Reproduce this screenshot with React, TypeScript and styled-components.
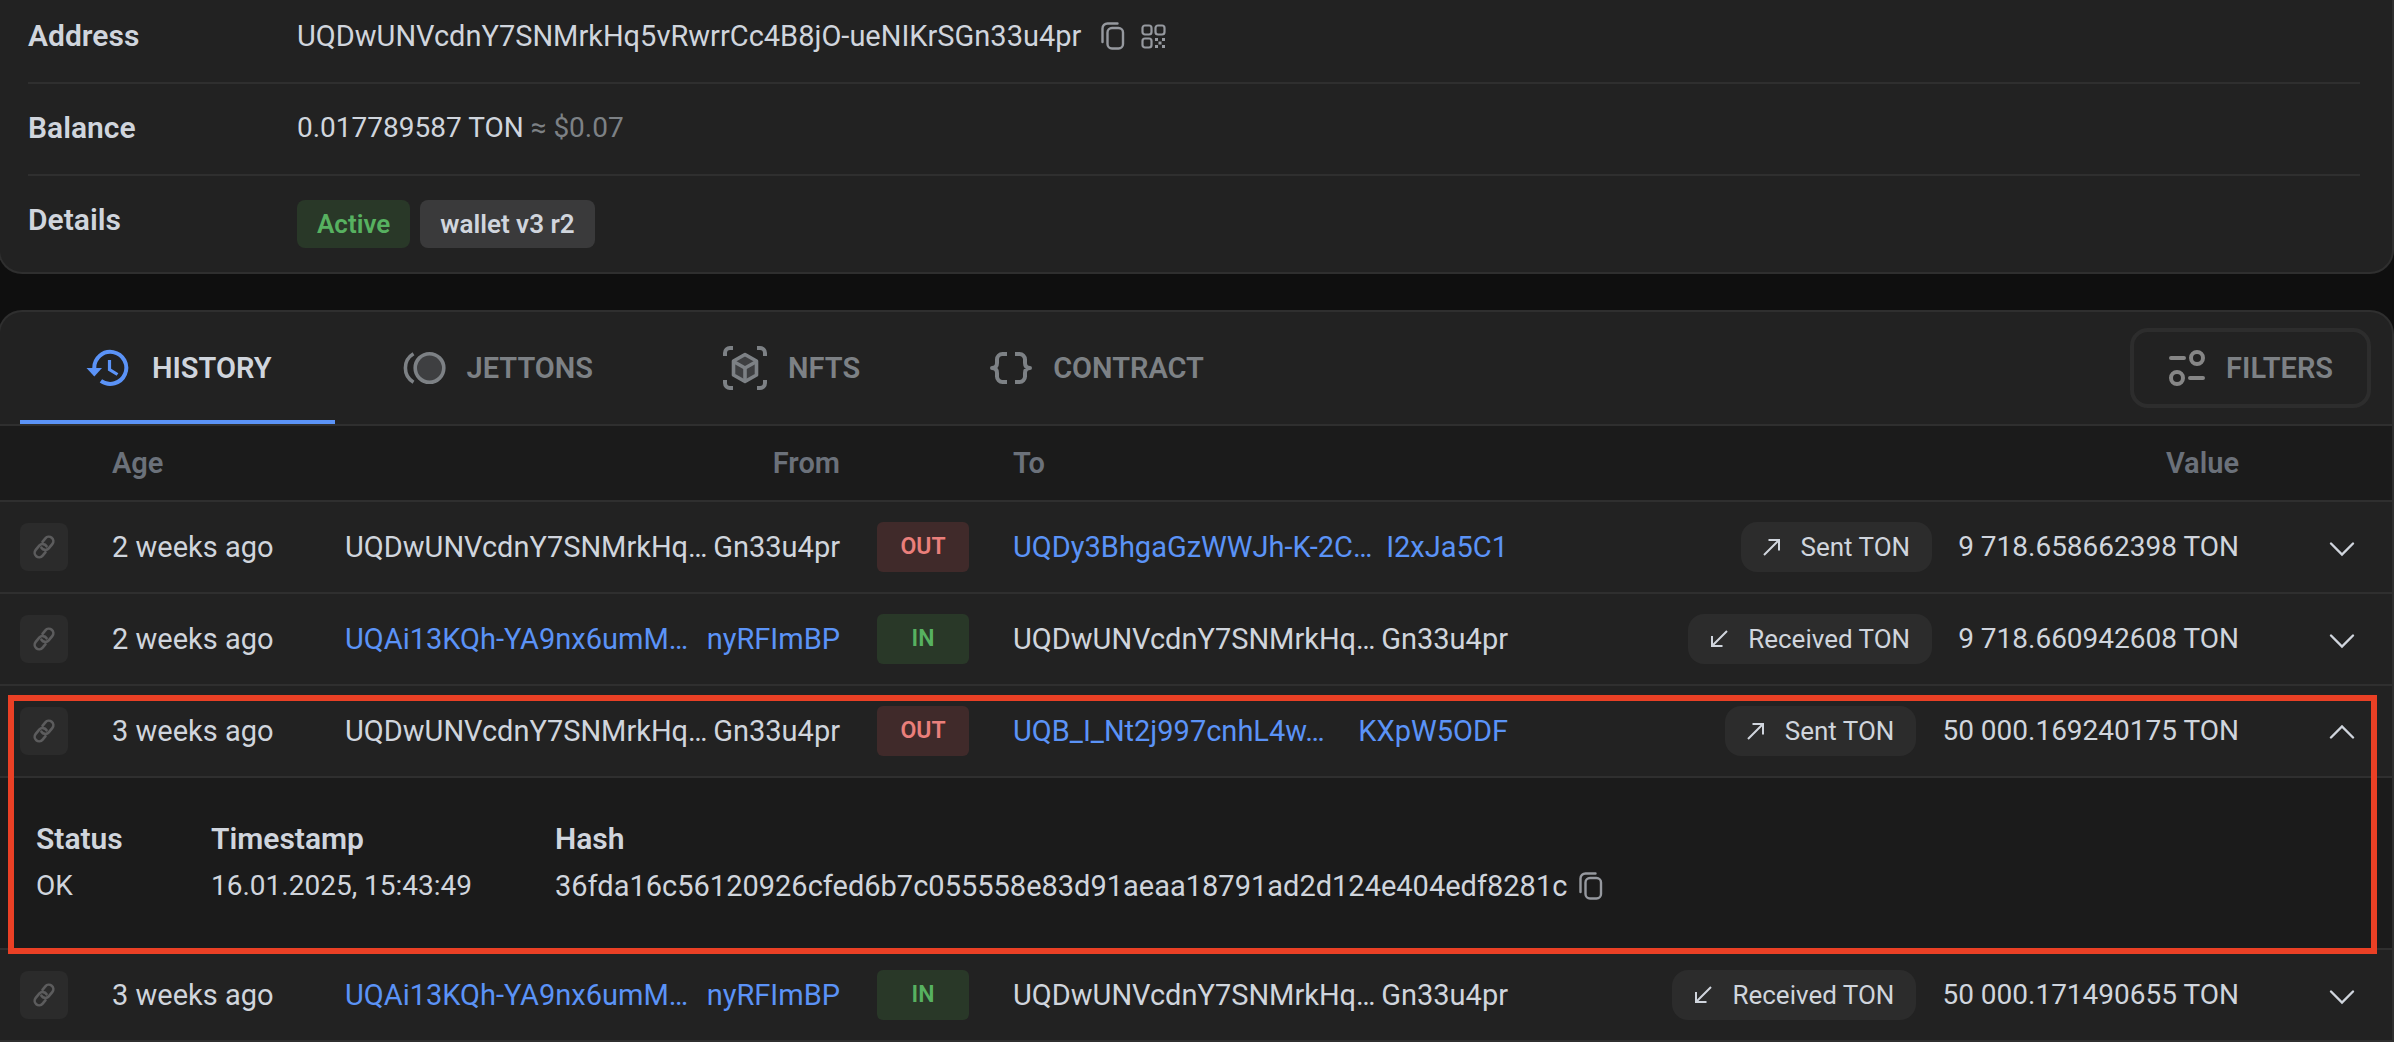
import React, { useState } from "react";
import styled, { createGlobalStyle, css } from "styled-components";

const color = {
  page: "#0f0f0f",
  card: "#222222",
  sunken: "#1b1b1b",
  line: "#2f2f2f",
  text: "#d0d5dd",
  muted: "#7d8185",
  faint: "#6b717a",
  accent: "#5b93f7",
  green: "#57b160",
  greenBg: "#293828",
  red: "#ea7f7b",
  redBg: "#402a2a",
  chip: "#2c2c2c",
  mark: "#ea4025",
};

const GlobalStyle = createGlobalStyle`
  * { box-sizing: border-box; }
  body {
    margin: 0;
    background: ${color.page};
    color: ${color.text};
    font-family: Roboto, "Liberation Sans", sans-serif;
    font-size: 29px;
    line-height: 34px;
    overflow-x: hidden;
    scrollbar-width: none;
  }
  button {
    font: inherit;
    color: inherit;
    background: none;
    border: 0;
    padding: 0;
    cursor: pointer;
  }
`;

const Page = styled.main`
  display: flex;
  flex-direction: column;
  gap: 36px;
  margin-left: -2px;
`;

const Card = styled.section<{ $top?: boolean }>`
  background: ${color.card};
  border: 2px solid ${color.line};
  border-radius: 24px;
  overflow: hidden;
  ${(p) =>
    p.$top
      ? css`
          border-top: 0;
          border-radius: 0 0 24px 24px;
        `
      : css`
          border-bottom: 0;
          border-radius: 24px 24px 0 0;
        `}
`;

/* Account summary */

const Summary = styled.dl`
  margin: 0;
  padding: 0 32px 0 28px;
`;

const SummaryRow = styled.div`
  display: grid;
  grid-template-columns: 269px 1fr;
  height: 92px;
  padding-top: 27px;
  border-bottom: 2px solid ${color.line};

  &:first-child {
    height: 84px;
    padding-top: 19px;
  }
  &:last-child {
    height: 96px;
    border-bottom: 0;
  }
`;

const Term = styled.dt`
  font-size: 30px;
  font-weight: 600;
`;

const Detail = styled.dd`
  display: flex;
  align-items: flex-start;
  margin: 0;
`;

const AddressIcons = styled.span`
  display: flex;
  gap: 16px;
  margin-left: 20px;
`;

const IconButton = styled.button`
  display: flex;
  align-items: center;
  height: 34px;
  color: #96999f;
`;

const Amount = styled.span`
  font-size: 28px;
`;

const Fiat = styled.span`
  color: ${color.muted};
`;

const Tags = styled.div`
  display: flex;
  gap: 10px;
  margin-top: -3px;
`;

const Tag = styled.span<{ $active?: boolean }>`
  padding: 0 20px;
  border-radius: 8px;
  font-size: 26px;
  font-weight: 600;
  line-height: 48px;
  color: ${(p) => (p.$active ? color.green : color.text)};
  background: ${(p) => (p.$active ? color.greenBg : "#3a3a3b")};
`;

/* Tabs */

const TabBar = styled.div`
  display: flex;
  align-items: center;
  justify-content: space-between;
  height: 114px;
  padding: 0 21px 0 20px;
  border-bottom: 2px solid ${color.line};
`;

const Tabs = styled.div`
  display: flex;
  align-self: stretch;
`;

const Tab = styled.button<{ $active?: boolean }>`
  display: flex;
  align-items: center;
  gap: 20px;
  padding: 0 63px 0 66px;
  font-weight: 600;
  color: ${(p) => (p.$active ? color.text : color.muted)};
  box-shadow: ${(p) => (p.$active ? `inset 0 -4px ${color.accent}` : "none")};

  svg {
    flex: none;
  }
`;

const FilterButton = styled.button`
  display: flex;
  align-items: center;
  gap: 20px;
  height: 80px;
  padding: 0 34px;
  border: 4px solid #2d2d2d;
  border-radius: 18px;
  font-weight: 600;
  color: ${color.muted};
`;

/* Transactions */

const Table = styled.table`
  width: 100%;
  table-layout: fixed;
  border-collapse: separate;
  border-spacing: 0;
`;

const Col = styled.col<{ $w?: number }>`
  width: ${(p) => (p.$w ? `${p.$w}px` : "auto")};
`;

const HeadCell = styled.th<{ $right?: boolean }>`
  height: 76px;
  padding: 0;
  background: ${color.sunken};
  border-bottom: 2px solid ${color.line};
  color: ${color.faint};
  font-weight: 600;
  text-align: ${(p) => (p.$right ? "right" : "left")};
`;

const Cell = styled.td<{ $right?: boolean }>`
  height: 92px;
  padding: 0;
  border-bottom: 2px solid ${color.line};
  text-align: ${(p) => (p.$right ? "right" : "left")};
  white-space: nowrap;
`;

const LinkCell = styled(Cell)`
  padding-left: 20px;
`;

const DirectionCell = styled(Cell)`
  padding-left: 37px;
`;

const ChevronCell = styled(Cell)`
  padding-right: 33px;
`;

const LinkBox = styled.a`
  display: flex;
  align-items: center;
  justify-content: center;
  width: 48px;
  height: 48px;
  border-radius: 8px;
  background: #2b2b2b;
  color: #5c5c5d;
`;

const Address = styled.span`
  display: flex;
  justify-content: space-between;
`;

const AddressLink = styled.a`
  display: flex;
  justify-content: space-between;
  color: ${color.accent};
  text-decoration: none;
`;

const Direction = styled.span<{ $out: boolean }>`
  display: block;
  width: 92px;
  border-radius: 6px;
  font-size: 23px;
  font-weight: 600;
  line-height: 50px;
  text-align: center;
  color: ${(p) => (p.$out ? color.red : color.green)};
  background: ${(p) => (p.$out ? color.redBg : color.greenBg)};
`;

const ValueGroup = styled.div`
  display: flex;
  align-items: center;
  justify-content: flex-end;
  gap: 26px;
  font-size: 28px;
`;

const Action = styled.span`
  display: flex;
  align-items: center;
  gap: 20px;
  height: 50px;
  padding: 0 22px;
  border-radius: 16px;
  background: ${color.chip};
  font-size: 26px;
`;

const ChevronButton = styled.button`
  display: inline-flex;
  padding: 4px;
  vertical-align: middle;
`;

const Group = styled.tbody<{ $marked?: boolean }>`
  ${(p) =>
    p.$marked &&
    css`
      position: relative;

      &::after {
        content: "";
        position: absolute;
        z-index: 1;
        inset: 9px 15px -4px 8px;
        border: 6px solid ${color.mark};
        pointer-events: none;
      }
    `}
`;

const ExpandedCell = styled.td`
  height: 172px;
  padding: 44px 36px 0;
  vertical-align: top;
  background: ${color.sunken};
  border-bottom: 2px solid ${color.line};
`;

const Facts = styled.dl`
  display: grid;
  grid-template-columns: 175px 344px 1fr;
  margin: 0;
`;

const FactName = styled.dt`
  margin-bottom: 13px;
  font-size: 30px;
  font-weight: 600;
`;

const FactValue = styled.dd<{ $small?: boolean }>`
  display: flex;
  gap: 12px;
  margin: 0;
  font-size: ${(p) => (p.$small ? 28 : 29)}px;
`;

/* Icons */

const CopyIcon = () => (
  <svg width="24" height="28" viewBox="0 0 24 28" fill="none" stroke="currentColor" strokeWidth="2.4" strokeLinecap="round">
    <rect x="6.5" y="6" width="15.5" height="20.5" rx="4.5" />
    <path d="M1.5 20V6.5a5 5 0 0 1 5-5H16.5" />
  </svg>
);

const QrIcon = () => (
  <svg width="25" height="25" viewBox="0 0 25 25" fill="none" stroke="currentColor" strokeWidth="2.2">
    <rect x="1.5" y="1.5" width="9" height="9" rx="2.5" />
    <rect x="14.5" y="1.5" width="9" height="9" rx="2.5" />
    <rect x="1.5" y="14.5" width="9" height="9" rx="2.5" />
    <path
      fill="currentColor"
      stroke="none"
      d="M14 14h3v3h-3zM21 14h3v3h-3zM17.5 17.5h3v3h-3zM14 21h3v3h-3zM21 21h3v3h-3z"
    />
  </svg>
);

const HistoryIcon = () => (
  <svg width="46" height="38" viewBox="0 0 46 38" fill="none" stroke={color.accent}>
    <path strokeWidth="4" d="M8.3 19.5a16 16 0 1 1 6.6 12.3" />
    <path d="M0.5 19h15.5l-7.7 8.5z" fill={color.accent} stroke="none" />
    <path strokeWidth="3.2" d="M23.500 11v9.500l8 5" />
  </svg>
);

const JettonsIcon = () => (
  <svg width="46" height="34" viewBox="0 0 46 34" fill="none" stroke={color.muted} strokeWidth="3.6">
    <circle cx="28.5" cy="17" r="14.3" fill="#3e3f41" />
    <path d="M12.5 2.8a16.5 16.5 0 0 0 0 28.4" />
  </svg>
);

const NftIcon = () => (
  <svg width="46" height="46" viewBox="0 0 46 46" fill="none" stroke={color.muted} strokeWidth="4">
    <path d="M3 11V8a5 5 0 0 1 5-5h3M35 3h3a5 5 0 0 1 5 5v3M43 35v3a5 5 0 0 1-5 5h-3M11 43H8a5 5 0 0 1-5-5v-3" />
    <path
      d="M23 9.500 34.500 16v14L23 36.500 11.500 30V16z"
      fill="#3e3f41"
      strokeWidth="3.6"
      strokeLinejoin="round"
    />
    <path d="M11.500 16.500 23 23l11.500-6.500M23 23v13" strokeWidth="3.6" />
  </svg>
);

const ContractIcon = () => (
  <svg width="44" height="34" viewBox="0 0 44 34" fill="none" stroke={color.muted} strokeWidth="4" strokeLinejoin="round">
    <path d="M18 3h-4.500A5.500 5.500 0 0 0 8 8.500V12c0 3-1.500 5-5 5 3.500 0 5 2 5 5v3.500a5.500 5.500 0 0 0 5.500 5.500H18M26 3h4.500A5.500 5.500 0 0 1 36 8.500V12c0 3 1.500 5 5 5-3.500 0-5 2-5 5v3.500a5.500 5.500 0 0 1-5.500 5.500H26" />
  </svg>
);

const FilterIcon = () => (
  <svg width="38" height="38" viewBox="0 0 38 38" fill="none" stroke="#868686" strokeWidth="4" strokeLinecap="round">
    <path d="M3 9h13M22 29h13" />
    <circle cx="29" cy="9" r="6" />
    <circle cx="9" cy="29" r="6" />
  </svg>
);

const ChainIcon = () => (
  <svg width="28" height="28" viewBox="0 0 28 28" fill="none" stroke="currentColor" strokeWidth="2.6" strokeLinecap="round">
    <g transform="rotate(-50 14 14)">
      <path d="M11 18.500H6.500a4.500 4.500 0 0 1 0-9H12a4.500 4.500 0 0 1 4.200 6" />
      <path d="M17 9.500h4.500a4.500 4.500 0 0 1 0 9H16a4.500 4.500 0 0 1-4.200-6" />
    </g>
  </svg>
);

const ArrowIcon = ({ out }: { out: boolean }) => (
  <svg width="18" height="18" viewBox="0 0 18 18" fill="none" stroke="currentColor" strokeWidth="2">
    <path d={out ? "M1 17 16 2M5.500 2H16v10.500" : "M17 1 2 16M2 6v10h10.500"} />
  </svg>
);

const ChevronIcon = ({ up }: { up: boolean }) => (
  <svg width="26" height="16" viewBox="0 0 26 16" fill="none" stroke="currentColor" strokeWidth="2.4" strokeLinecap="round">
    <path d={up ? "M2 12.500 13 1.500l11 11" : "M2 2.500l11 11 11-11"} />
  </svg>
);

/* Data */

type Party = [head: string, tail: string];

interface Tx {
  id: number;
  age: string;
  from: Party;
  to: Party;
  out: boolean;
  value: string;
}

const OWN: Party = ["UQDwUNVcdnY7SNMrkHq…", "Gn33u4pr"];
const SENDER: Party = ["UQAi13KQh-YA9nx6umM…", "nyRFImBP"];

const transactions: Tx[] = [
  { id: 1, age: "2 weeks ago", from: OWN, to: ["UQDy3BhgaGzWWJh-K-2C…", "I2xJa5C1"], out: true, value: "9 718.658662398 TON" },
  { id: 2, age: "2 weeks ago", from: SENDER, to: OWN, out: false, value: "9 718.660942608 TON" },
  { id: 3, age: "3 weeks ago", from: OWN, to: ["UQB_I_Nt2j997cnhL4w…", "KXpW5ODF"], out: true, value: "50 000.169240175 TON" },
  { id: 4, age: "3 weeks ago", from: SENDER, to: OWN, out: false, value: "50 000.171490655 TON" },
];

const tabs = [
  { name: "HISTORY", icon: <HistoryIcon /> },
  { name: "JETTONS", icon: <JettonsIcon /> },
  { name: "NFTS", icon: <NftIcon /> },
  { name: "CONTRACT", icon: <ContractIcon /> },
];

const PartyView = ({ party }: { party: Party }) => {
  const parts = (
    <>
      <span>{party[0]}</span>
      <span>{party[1]}</span>
    </>
  );
  return party === OWN ? <Address>{parts}</Address> : <AddressLink href="#">{parts}</AddressLink>;
};

interface TxGroupProps {
  tx: Tx;
  open: boolean;
  onToggle: () => void;
}

const TxGroup = ({ tx, open, onToggle }: TxGroupProps) => (
  <Group $marked={open}>
    <tr>
      <LinkCell>
        <LinkBox href="#" aria-label="Transaction link">
          <ChainIcon />
        </LinkBox>
      </LinkCell>
      <Cell>{tx.age}</Cell>
      <Cell>
        <PartyView party={tx.from} />
      </Cell>
      <DirectionCell>
        <Direction $out={tx.out}>{tx.out ? "OUT" : "IN"}</Direction>
      </DirectionCell>
      <Cell>
        <PartyView party={tx.to} />
      </Cell>
      <Cell>
        <ValueGroup>
          <Action>
            <ArrowIcon out={tx.out} />
            {tx.out ? "Sent TON" : "Received TON"}
          </Action>
          {tx.value}
        </ValueGroup>
      </Cell>
      <ChevronCell $right>
        <ChevronButton onClick={onToggle} aria-expanded={open} aria-label="Toggle details">
          <ChevronIcon up={open} />
        </ChevronButton>
      </ChevronCell>
    </tr>
    {open && (
      <tr>
        <ExpandedCell colSpan={7}>
          <Facts>
            <div>
              <FactName>Status</FactName>
              <FactValue $small>OK</FactValue>
            </div>
            <div>
              <FactName>Timestamp</FactName>
              <FactValue $small>16.01.2025, 15:43:49</FactValue>
            </div>
            <div>
              <FactName>Hash</FactName>
              <FactValue>
                36fda16c56120926cfed6b7c055558e83d91aeaa18791ad2d124e404edf8281c
                <IconButton aria-label="Copy hash">
                  <CopyIcon />
                </IconButton>
              </FactValue>
            </div>
          </Facts>
        </ExpandedCell>
      </tr>
    )}
  </Group>
);

export default function App() {
  const [tab, setTab] = useState("HISTORY");
  const [openId, setOpenId] = useState<number | null>(3);

  return (
    <Page>
      <GlobalStyle />
      <Card $top>
        <Summary>
          <SummaryRow>
            <Term>Address</Term>
            <Detail>
              UQDwUNVcdnY7SNMrkHq5vRwrrCc4B8jO-ueNIKrSGn33u4pr
              <AddressIcons>
                <IconButton aria-label="Copy address">
                  <CopyIcon />
                </IconButton>
                <IconButton aria-label="Show QR code">
                  <QrIcon />
                </IconButton>
              </AddressIcons>
            </Detail>
          </SummaryRow>
          <SummaryRow>
            <Term>Balance</Term>
            <Detail>
              <Amount>
                0.017789587 TON <Fiat>≈ $0.07</Fiat>
              </Amount>
            </Detail>
          </SummaryRow>
          <SummaryRow>
            <Term>Details</Term>
            <Detail>
              <Tags>
                <Tag $active>Active</Tag>
                <Tag>wallet v3 r2</Tag>
              </Tags>
            </Detail>
          </SummaryRow>
        </Summary>
      </Card>

      <Card>
        <TabBar>
          <Tabs role="tablist">
            {tabs.map(({ name, icon }) => (
              <Tab key={name} role="tab" aria-selected={tab === name} $active={tab === name} onClick={() => setTab(name)}>
                {icon}
                {name}
              </Tab>
            ))}
          </Tabs>
          <FilterButton>
            <FilterIcon />
            FILTERS
          </FilterButton>
        </TabBar>
        <Table>
          <colgroup>
            <Col $w={112} />
            <Col $w={233} />
            <Col $w={495} />
            <Col $w={173} />
            <Col $w={495} />
            <Col />
            <Col $w={153} />
          </colgroup>
          <thead>
            <tr>
              <HeadCell />
              <HeadCell>Age</HeadCell>
              <HeadCell $right>From</HeadCell>
              <HeadCell />
              <HeadCell>To</HeadCell>
              <HeadCell $right>Value</HeadCell>
              <HeadCell />
            </tr>
          </thead>
          {transactions.map((tx) => (
            <TxGroup
              key={tx.id}
              tx={tx}
              open={openId === tx.id}
              onToggle={() => setOpenId(openId === tx.id ? null : tx.id)}
            />
          ))}
        </Table>
      </Card>
    </Page>
  );
}
